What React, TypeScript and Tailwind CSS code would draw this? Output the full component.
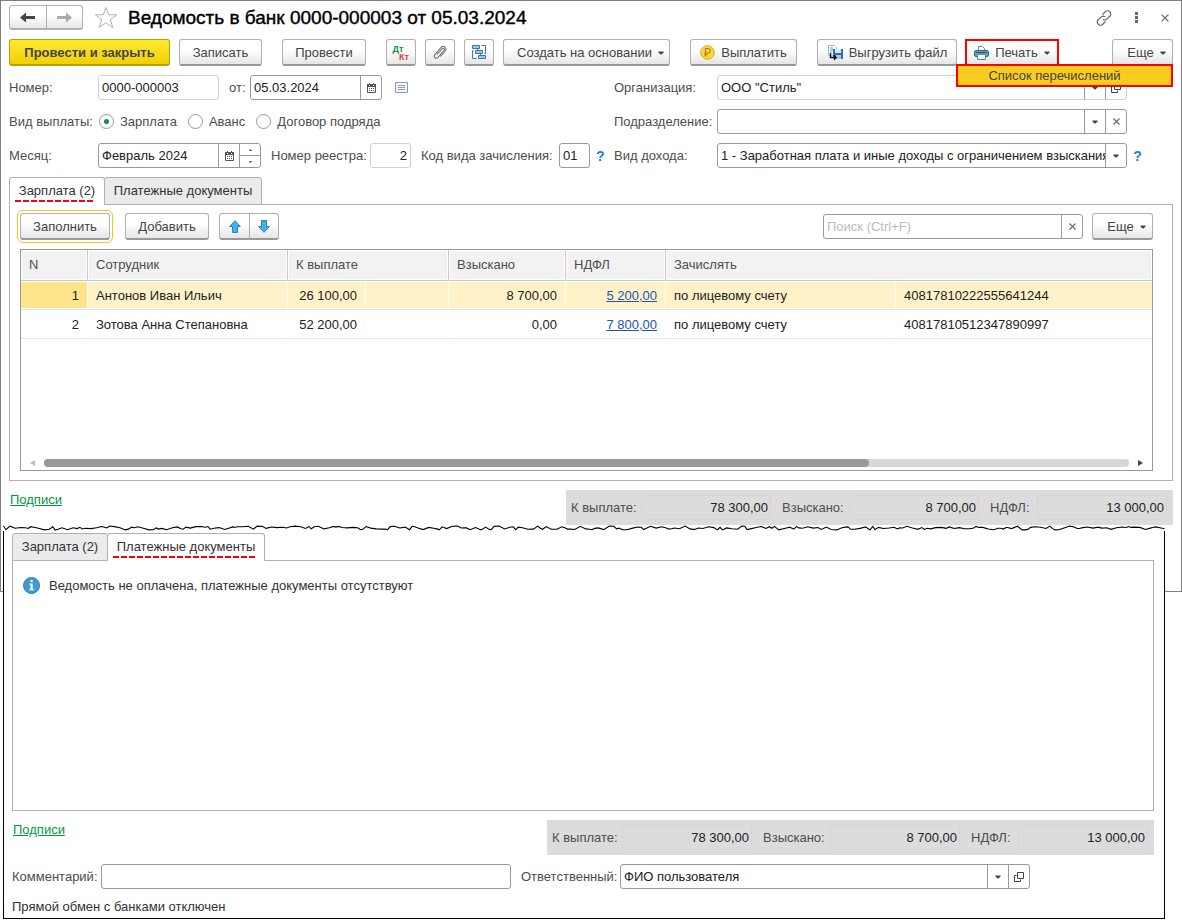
import { useState } from "react";
import type { ReactNode } from "react";
import clsx from "clsx";

interface ToolButtonProps {
  children: ReactNode;
  className?: string;
  label?: string;
  onClick?: () => void;
}

function ToolButton({ children, className, label, onClick }: ToolButtonProps) {
  return (
    <button
      type="button"
      aria-label={label}
      onClick={onClick}
      className={clsx(
        "flex h-[27px] shrink-0 items-center justify-center rounded-[3px] border border-b-2 border-[#b0b0b0] border-b-[#989898] bg-linear-to-b from-white from-40% to-[#e6e6e6] pt-px whitespace-nowrap text-[#444]",
        className
      )}
    >
      {children}
    </button>
  );
}

function Caret() {
  return (
    <svg width="6" height="4" viewBox="0 0 6 4" fill="#444" aria-hidden="true">
      <path d="M0.500 0.500h5v1L3.500 3.500h-1L0.500 1.500z" />
    </svg>
  );
}

function CrossIcon({ size = 7 }: { size?: number }) {
  return (
    <svg width={size} height={size} viewBox="0 0 7 7" stroke="#666" strokeWidth="1.1" aria-hidden="true">
      <path d="M0.5 0.5l6 6M6.5 0.5l-6 6" />
    </svg>
  );
}

function OpenIcon() {
  return (
    <svg width="10" height="10" viewBox="0 0 10 10" fill="none" stroke="#444" aria-hidden="true">
      <path d="M3.5 0.5h6v6h-6zM2.5 3.5h-2v6h6v-2" />
    </svg>
  );
}

function CalendarIcon() {
  return (
    <svg width="9" height="10" viewBox="0 0 9 10" aria-hidden="true">
      <path d="M0.5 1.5h8v8h-8z" fill="none" stroke="#555" />
      <path d="M0 1h9v3H0zM2 0h1v2H2zM6 0h1v2H6z" fill="#555" />
      <path d="M2 2h1v1H2zM6 2h1v1H6z" fill="#fff" />
      <path d="M2 5h1v1H2zM4 5h1v1H4zM6 5h1v1H6zM2 7h1v1H2zM4 7h1v1H4zM6 7h1v1H6z" fill="#555" />
    </svg>
  );
}

function ArrowIcon({ color, flip = false }: { color: string; flip?: boolean }) {
  return (
    <svg width="15" height="11" viewBox="0 0 15 11" className={clsx(flip && "rotate-180")} aria-hidden="true">
      <path d="M0 5.5L6 0.5v3.5h9v3H6v3.5z" fill={color} />
    </svg>
  );
}

function MoveIcon({ down = false }: { down?: boolean }) {
  return (
    <svg width="12" height="13" viewBox="0 0 12 13" className={clsx(down && "rotate-180")} aria-hidden="true">
      <path d="M6 0.7L11.3 6.5H8.5v6h-5v-6H0.7z" fill="#42b0f0" stroke="#2b83bd" />
    </svg>
  );
}

function StarIcon() {
  return (
    <svg width="24" height="23" viewBox="0 0 24 23" fill="none" stroke="#a9b2ba" aria-hidden="true">
      <path d="M12 1.5l2.7 7.3h8l-6.4 4.8 2.5 8L12 16.8l-6.8 4.8 2.5-8-6.4-4.8h8z" />
    </svg>
  );
}

function LinkIcon() {
  return (
    <svg width="16" height="16" viewBox="0 0 16 16" fill="none" stroke="#666" strokeWidth="1.2" aria-hidden="true">
      <path d="M6.5 4.5l2.7-2.7a3 3 0 0 1 4.6 0 3 3 0 0 1 0 4.4l-2.8 2.7a3 3 0 0 1-4 .3" />
      <path d="M9.5 11.5l-2.7 2.7a3 3 0 0 1-4.6 0 3 3 0 0 1 0-4.4L5 7.1a3 3 0 0 1 4-.3" />
    </svg>
  );
}

function ClipIcon() {
  return (
    <svg width="14" height="15" viewBox="0 0 14 15" fill="none" stroke="#707070" strokeWidth="1.1" aria-hidden="true">
      <path d="M4 9.5l5-5.6c1.3-1.4 3.2.2 2 1.6l-6 6.8c-2 2.2-5-.3-3.2-2.5L8 2.5c2.4-2.7 6.5.4 4.2 3.5L7.5 11.5" />
    </svg>
  );
}

function TreeIcon() {
  return (
    <svg width="15" height="15" viewBox="0 0 15 15" aria-hidden="true">
      <g fill="#a3c6de" stroke="#3c7aa6">
        <path d="M0.5 0.5h7v3h-7zM3.5 5.5h7v3h-7zM6.5 10.5h7v3h-7z" />
      </g>
      <path d="M9.5 0.5h4v8h-1M4.500 13.5h-4v-8h1M5.500 3.500v2M8.500 8.500v2" fill="none" stroke="#3c7aa6" />
    </svg>
  );
}

function CoinIcon() {
  return (
    <svg width="15" height="15" viewBox="0 0 15 15" aria-hidden="true">
      <circle cx="7.5" cy="7.5" r="6.8" fill="#fdd83c" stroke="#e3a61b" />
      <path d="M5.5 11.5v-8H8a2.2 2.2 0 0 1 0 4.5H4.2M4.2 9.8H8" fill="none" stroke="#b87c10" strokeWidth="1.1" />
    </svg>
  );
}

function ExportIcon() {
  return (
    <svg width="16" height="16" viewBox="0 0 16 16" aria-hidden="true">
      <path d="M1.5 0.5h6l2 2v8h-8z" fill="#fff" stroke="#9bb6cc" />
      <path d="M3 3h3M3 5h3M3 7h2" stroke="#5c9bd0" />
      <path d="M6 4h10v10H7l-1-1z" fill="#2f6fb0" />
      <path d="M8 4h6v4H8z" fill="#d8e9f7" />
      <path d="M9 10h5v4H9z" fill="#a9c9e6" />
      <path d="M3.5 8v4.5H8" fill="none" stroke="#111" strokeWidth="1.4" />
      <path d="M7 9.8l3.2 2.9L7 15.600z" fill="#111" />
    </svg>
  );
}

function PrinterIcon() {
  return (
    <svg width="15" height="14" viewBox="0 0 15 14" aria-hidden="true">
      <path d="M4.5 5V0.5h4l2 2V5" fill="#fff" stroke="#5f88a8" />
      <rect x="0.5" y="4.5" width="14" height="6" rx="1.5" fill="#6a9fc6" stroke="#2f6690" />
      <path d="M2 6.5h11" stroke="#1f4c70" />
      <path d="M3.5 8.5h8v5h-8z" fill="#fff" stroke="#5f88a8" />
    </svg>
  );
}

function ListIcon() {
  return (
    <svg width="13" height="11" viewBox="0 0 13 11" fill="none" aria-hidden="true">
      <path d="M0.5 0.5h12v10h-12z" fill="#f6f8fa" stroke="#8c9cad" />
      <path d="M3 3.5h7M3 5.5h7M3 7.5h7" stroke="#8c9cad" />
    </svg>
  );
}

function InfoIcon() {
  return (
    <svg width="17" height="17" viewBox="0 0 17 17" aria-hidden="true">
      <circle cx="8.5" cy="8.5" r="8" fill="#3f9bd0" stroke="#2f7fb0" />
      <path d="M7.5 3h2.2v2H7.5zM6.5 6.5h3.2V12H11v1.2H6.3V12h1.2V7.7h-1z" fill="#fff" />
    </svg>
  );
}

interface FieldProps {
  id: string;
  label: string;
  value?: string;
  muted?: boolean;
  right?: boolean;
  placeholder?: string;
  className?: string;
  children?: ReactNode;
}

// text box with optional side buttons
function Field({ id, label, value = "", muted, right, placeholder, className, children }: FieldProps) {
  const [text, setText] = useState(value);
  return (
    <div
      className={clsx(
        "flex h-[25px] overflow-hidden rounded-[3px] border bg-white",
        muted ? "border-[#d0d0d0]" : "border-[#999]",
        className
      )}
    >
      <input
        id={id}
        aria-label={label}
        value={text}
        placeholder={placeholder}
        onChange={(e) => setText(e.target.value)}
        className={clsx(
          "min-w-0 flex-1 px-[3px] text-[#222] outline-none placeholder:text-[#bbb]",
          right && "text-right"
        )}
      />
      {children}
    </div>
  );
}

function SideButton({ label, children }: { label: string; children: ReactNode }) {
  return (
    <button
      type="button"
      aria-label={label}
      className="flex w-[21px] shrink-0 items-center justify-center border-l border-[#999]"
    >
      {children}
    </button>
  );
}

interface ComboProps {
  id: string;
  options: string[];
  muted?: boolean;
  className?: string;
  children?: ReactNode;
}

function Combo({ id, options, muted, className, children }: ComboProps) {
  return (
    <div
      className={clsx(
        "flex h-[25px] min-w-0 overflow-hidden rounded-[3px] border bg-white",
        muted ? "border-[#d0d0d0]" : "border-[#999]",
        className
      )}
    >
      <select id={id} className="min-w-0 flex-1 appearance-none pl-[3px] text-[#222] outline-none">
        {options.map((option) => (
          <option key={option}>{option}</option>
        ))}
      </select>
      <span className="pointer-events-none flex w-[21px] shrink-0 items-center justify-center border-l border-[#999]">
        <Caret />
      </span>
      {children}
    </div>
  );
}

interface TabsProps {
  active: number;
}

const tabTitles = ["Зарплата (2)", "Платежные документы"];

function Tabs({ active }: TabsProps) {
  return (
    <div role="tablist" className="-mb-px flex">
      {tabTitles.map((title, i) => (
        <button
          key={title}
          type="button"
          role="tab"
          aria-selected={i === active}
          className={clsx(
            "relative h-7 rounded-t-[3px] border border-[#b0b0b0] text-[#333]",
            i === 0 ? "w-24" : "-ml-px w-[158px]",
            i === active ? "border-b-white bg-white" : "bg-[#ebebeb]"
          )}
        >
          {title}
          {i === active && (
            <span className="absolute right-[9px] bottom-0.5 left-[5px] h-0.5 bg-[repeating-linear-gradient(90deg,#f00_0_6px,transparent_6px_8px)]" />
          )}
        </button>
      ))}
    </div>
  );
}

const totals = [
  { id: "pay", label: "К выплате:", value: "78 300,00", width: "w-[70px]" },
  { id: "hold", label: "Взыскано:", value: "8 700,00", width: "w-[67px]" },
  { id: "tax", label: "НДФЛ:", value: "13 000,00", width: "w-[47px]" },
];

function Totals({ prefix }: { prefix: string }) {
  return (
    <div className="flex h-[35px] items-center gap-[11px] bg-[#dcdcdc] pr-1.5 pl-[5px]">
      {totals.map((total) => (
        <div key={total.id} className="flex items-center">
          <label htmlFor={`${prefix}-${total.id}`} className={clsx("whitespace-nowrap", total.width)}>
            {total.label}
          </label>
          <input
            id={`${prefix}-${total.id}`}
            readOnly
            value={total.value}
            className="h-[25px] w-[130px] rounded-[3px] border border-[#d6d6d6] pr-0.5 text-right text-[#222] outline-none"
          />
        </div>
      ))}
    </div>
  );
}

const rows = [
  { n: 1, name: "Антонов Иван Ильич", pay: "26 100,00", hold: "8 700,00", tax: "5 200,00", account: "40817810222555641244" },
  { n: 2, name: "Зотова Анна Степановна", pay: "52 200,00", hold: "0,00", tax: "7 800,00", account: "40817810512347890997" },
];

const headers = [
  { title: "N", span: 1 },
  { title: "Сотрудник", span: 1 },
  { title: "К выплате", span: 2 },
  { title: "Взыскано", span: 1 },
  { title: "НДФЛ", span: 1 },
  { title: "Зачислять", span: 2 },
];

function EmployeeTable() {
  const [selected, setSelected] = useState(1);
  return (
    <div className="flex h-[222px] flex-col justify-between border border-[#999]">
      <table className="w-full table-fixed border-separate border-spacing-0">
        <colgroup>
          <col className="w-[67px]" />
          <col className="w-[200px]" />
          <col className="w-[78px]" />
          <col className="w-[83px]" />
          <col className="w-[117px]" />
          <col className="w-[100px]" />
          <col className="w-[230px]" />
          <col />
        </colgroup>
        <thead>
          <tr>
            {headers.map((h) => (
              <th
                key={h.title}
                colSpan={h.span}
                className="h-[31px] border-r border-b border-[#c8c8c8] bg-[#f2f2f2] px-2 text-left font-normal text-[#4d4d4d] shadow-[inset_0_0_0_1px_#fff] last:border-r-0"
              >
                {h.title}
              </th>
            ))}
          </tr>
        </thead>
        <tbody>
          {rows.map((row) => (
            <tr
              key={row.n}
              onClick={() => setSelected(row.n)}
              className={clsx(
                "text-[#222] *:h-[29px] *:border-r *:border-b *:border-r-white *:border-b-[#e4e4e4] *:px-2 *:pt-0.5 *:shadow-[inset_0_1px_0_#fff,inset_0_-1px_0_#fff] *:last:border-r-0",
                row.n === selected && "bg-[#fff2c8]"
              )}
            >
              <td className={clsx("text-right", row.n === selected && "bg-[#ffe48c]")}>{row.n}</td>
              <td>{row.name}</td>
              <td className="text-right whitespace-nowrap">{row.pay}</td>
              <td />
              <td className="text-right">{row.hold}</td>
              <td className="text-right">
                <a href="#tax" className="text-[#1a56b0] underline">
                  {row.tax}
                </a>
              </td>
              <td>по лицевому счету</td>
              <td>{row.account}</td>
            </tr>
          ))}
        </tbody>
      </table>
      <div className="flex h-[15px] items-center gap-[9px] px-[9px]">
        <svg width="5" height="6" viewBox="0 0 5 6" fill="#bbb" aria-hidden="true">
          <path d="M5 0v6L0 3z" />
        </svg>
        <div className="h-2 flex-1 rounded-full bg-[#d6d6d6]">
          <div className="h-2 w-[76%] rounded-full bg-[#999]" />
        </div>
        <svg width="5" height="6" viewBox="0 0 5 6" fill="#444" aria-hidden="true">
          <path d="M0 0v6l5-3z" />
        </svg>
      </div>
    </div>
  );
}

// ragged line along the cut edge of the lower window
const tornPoints = Array.from({ length: 291 }, (_, i) => {
  const noise = Math.sin(i * 12.9898) * 43758.5453;
  const y = 1 + (noise - Math.floor(noise)) * 4;
  const shift = i === 0 || i === 290 ? 0 : Math.sin(i * 5.3) * 1.8;
  return `${(i * 4 + 0.5 + shift).toFixed(1)},${y.toFixed(1)}`;
}).join(" ");

function TornEdge() {
  return (
    <svg className="block h-[6px] w-full" viewBox="0 0 1161 6" preserveAspectRatio="none" aria-hidden="true">
      <polyline points={tornPoints} fill="none" stroke="#000" strokeWidth="1.1" />
    </svg>
  );
}

const payKinds = ["Зарплата", "Аванс", "Договор подряда"];

function DocumentForm() {
  const [kind, setKind] = useState(payKinds[0]);
  return (
    <div className="grid grid-cols-[605px_minmax(0,1fr)] gap-y-[9px] pr-[46px]">
      <div className="flex items-center">
        <label htmlFor="number" className="w-[89px]">
          Номер:
        </label>
        <Field id="number" label="Номер" value="0000-000003" muted className="w-[121px]" />
        <label htmlFor="date" className="w-[31px] pl-2.5">
          от:
        </label>
        <Field id="date" label="Дата" value="05.03.2024" className="w-[132px]">
          <SideButton label="Выбрать дату">
            <CalendarIcon />
          </SideButton>
        </Field>
        <button type="button" aria-label="Список" className="ml-[13px]">
          <ListIcon />
        </button>
      </div>
      <div className="flex items-center">
        <label htmlFor="org" className="w-[103px] shrink-0">
          Организация:
        </label>
        <Combo id="org" options={['ООО "Стиль"']} muted className="flex-1">
          <SideButton label="Открыть">
            <OpenIcon />
          </SideButton>
        </Combo>
      </div>

      <fieldset className="flex h-[25px] items-center">
        <legend className="float-left w-[90px]">Вид выплаты:</legend>
        <div className="flex gap-[11px]">
          {payKinds.map((k) => (
            <label key={k} className="flex items-center gap-1.5 whitespace-nowrap">
              <input
                type="radio"
                name="kind"
                checked={kind === k}
                onChange={() => setKind(k)}
                className="grid size-[15px] appearance-none place-items-center rounded-full border border-[#999] bg-white before:size-[5px] before:rounded-full checked:before:bg-[#009646]"
              />
              {k}
            </label>
          ))}
        </div>
      </fieldset>
      <div className="flex items-center">
        <label htmlFor="dept" className="w-[103px] shrink-0">
          Подразделение:
        </label>
        <Combo id="dept" options={[""]} className="flex-1">
          <SideButton label="Очистить">
            <CrossIcon />
          </SideButton>
        </Combo>
      </div>

      <div className="flex items-center">
        <label htmlFor="month" className="w-[89px]">
          Месяц:
        </label>
        <Field id="month" label="Месяц" value="Февраль 2024" className="w-[163px]">
          <SideButton label="Выбрать месяц">
            <CalendarIcon />
          </SideButton>
          <div className="flex w-[21px] flex-col border-l border-[#999]">
            <button type="button" aria-label="Больше" className="flex flex-1 items-center justify-center border-b border-[#999]">
              <svg width="3" height="2" viewBox="0 0 3 2" fill="#444">
                <path d="M0 2L1.5 0L3 2z" />
              </svg>
            </button>
            <button type="button" aria-label="Меньше" className="flex flex-1 items-center justify-center">
              <svg width="3" height="2" viewBox="0 0 3 2" fill="#444">
                <path d="M0 0L1.5 2L3 0z" />
              </svg>
            </button>
          </div>
        </Field>
        <label htmlFor="registry" className="w-[109px] pl-2.5 whitespace-nowrap">
          Номер реестра:
        </label>
        <Field id="registry" label="Номер реестра" value="2" muted right className="w-[41px]" />
        <label htmlFor="code" className="w-[148px] pl-2.5 whitespace-nowrap">
          Код вида зачисления:
        </label>
        <Field id="code" label="Код вида зачисления" value="01" className="w-[31px]" />
        <button type="button" className="ml-1.5 text-sm font-bold text-[#1583cc]">
          ?
        </button>
      </div>
      <div className="flex items-center">
        <label htmlFor="income" className="w-[103px] shrink-0">
          Вид дохода:
        </label>
        <Combo
          id="income"
          options={["1 - Заработная плата и иные доходы с ограничением взыскания"]}
          className="flex-1"
        />
        <button type="button" className="-mr-[15px] ml-1.5 w-[9px] shrink-0 text-sm font-bold text-[#1583cc]">
          ?
        </button>
      </div>
    </div>
  );
}

function Toolbar() {
  const [open, setOpen] = useState(true);
  return (
    <div className="flex items-center">
      <button
        type="button"
        className="h-[27px] w-[161px] shrink-0 rounded-[3px] border border-b-2 border-[#b8a000] bg-linear-to-b from-[#ffe92e] to-[#f2cf00] pt-px font-bold whitespace-nowrap text-[#444]"
      >
        Провести и закрыть
      </button>
      <ToolButton className="ml-[9px] w-[83px]">Записать</ToolButton>
      <ToolButton className="ml-5 w-[84px]">Провести</ToolButton>
      <ToolButton className="ml-5 w-[30px]" label="Дт/Кт">
        <span className="flex flex-col text-[9px] leading-[8px] font-bold">
          <span className="pr-1.5 text-[#009646]">Дт</span>
          <span className="pl-1.5 text-[#e03c3c]">Кт</span>
        </span>
      </ToolButton>
      <ToolButton className="ml-[9px] w-[30px]" label="Присоединенные файлы">
        <ClipIcon />
      </ToolButton>
      <ToolButton className="ml-[9px] w-[30px]" label="Структура подчиненности">
        <TreeIcon />
      </ToolButton>
      <ToolButton className="ml-[9px] w-[167px] gap-1.5 pl-2">
        Создать на основании
        <Caret />
      </ToolButton>
      <ToolButton className="ml-5 w-[107px] gap-1.5">
        <CoinIcon />
        Выплатить
      </ToolButton>
      <ToolButton className="ml-5 w-[140px] gap-1.5">
        <ExportIcon />
        Выгрузить файл
      </ToolButton>
      <div className="ml-2 flex-1">
        <button
          type="button"
          aria-haspopup="menu"
          aria-expanded={open}
          onClick={() => setOpen(!open)}
          className="flex h-[27px] w-[94px] items-center justify-center gap-1.5 border-2 border-[#f00] bg-linear-to-b from-white from-40% to-[#e6e6e6] text-[#444]"
        >
          <PrinterIcon />
          Печать
          <Caret />
        </button>
      </div>
      <div className="relative">
        <ToolButton className="w-[61px] gap-1.5 pl-2">
          Еще
          <Caret />
        </ToolButton>
        {open && (
          <div role="menu" className="absolute top-[25px] right-0 z-10 w-[217px]">
            <button
              type="button"
              role="menuitem"
              className="h-[23px] w-full border-2 border-[#f00] bg-[#facc20] pr-5 text-center text-[#444]"
            >
              Список перечислений
            </button>
          </div>
        )}
      </div>
    </div>
  );
}

export default function App() {
  return (
    <div className="bg-white pb-0.5 font-['Liberation_Sans',Arial,sans-serif] text-[13px] leading-4 text-[#4d4d4d]">
      <main className="border border-[#808080] px-2 pt-1 pb-[66px]">
        <header className="flex h-[25px] items-center">
          <div className="flex h-[25px] w-[74px] rounded-[3px] border border-b-2 border-[#b0b0b0] bg-linear-to-b from-white from-40% to-[#e6e6e6]">
            <button type="button" aria-label="Назад" className="flex flex-1 items-center justify-center border-r border-[#b0b0b0]">
              <ArrowIcon color="#444" />
            </button>
            <button type="button" aria-label="Вперед" className="flex flex-1 items-center justify-center">
              <ArrowIcon color="#aaa" flip />
            </button>
          </div>
          <button type="button" aria-label="В избранное" className="ml-[11px]">
            <StarIcon />
          </button>
          <h1 className="ml-2.5 flex-1 text-[19px] leading-6 whitespace-nowrap text-black [-webkit-text-stroke:0.4px]">
            Ведомость в банк 0000-000003 от 05.03.2024
          </h1>
          <div className="flex items-center gap-[23px] pr-1">
            <button type="button" aria-label="Ссылка">
              <LinkIcon />
            </button>
            <button type="button" aria-label="Меню">
              <svg width="3" height="11" viewBox="0 0 3 11" fill="#666">
                <path d="M0 0h3v3H0zM0 4h3v3H0zM0 8h3v3H0z" />
              </svg>
            </button>
            <button type="button" aria-label="Закрыть">
              <CrossIcon size={8} />
            </button>
          </div>
        </header>

        <div className="mt-[9px]">
          <Toolbar />
        </div>
        <div className="mt-[9px]">
          <DocumentForm />
        </div>

        <div className="mt-[9px]">
          <Tabs active={0} />
          <div className="border border-[#b0b0b0] pt-2 pr-[19px] pb-[9px] pl-2.5">
            <div className="flex items-center">
              <ToolButton className="w-[90px] outline-1 outline-offset-2 outline-[#f5c518]">Заполнить</ToolButton>
              <ToolButton className="ml-[15px] w-[84px]">Добавить</ToolButton>
              <div className="ml-2.5 flex">
                <ToolButton className="w-[31px] rounded-r-none" label="Вверх">
                  <MoveIcon />
                </ToolButton>
                <ToolButton className="-ml-px w-[30px] rounded-l-none" label="Вниз">
                  <MoveIcon down />
                </ToolButton>
              </div>
              <Field id="search" label="Поиск" placeholder="Поиск (Ctrl+F)" className="ml-auto w-[260px]">
                <SideButton label="Очистить поиск">
                  <CrossIcon />
                </SideButton>
              </Field>
              <ToolButton className="ml-[9px] w-[61px] gap-1.5 pl-2">
                Еще
                <Caret />
              </ToolButton>
            </div>
            <div className="mt-[9px]">
              <EmployeeTable />
            </div>
          </div>
        </div>

        <div className="mt-[9px] flex items-start justify-between">
          <a href="#signatures" className="mt-0.5 ml-px text-[#009646] underline">
            Подписи
          </a>
          <Totals prefix="main" />
        </div>
      </main>

      <section className="relative mr-[17px] ml-[3px] -mt-[67px] bg-white">
        <TornEdge />
        <div className="border-x border-b border-black pt-0.5 pr-2.5 pb-[3px] pl-2">
          <Tabs active={1} />
          <div className="h-[251px] border border-[#b0b0b0] p-2.5">
            <p className="flex h-[29px] items-center gap-[9px] text-[#333]">
              <InfoIcon />
              Ведомость не оплачена, платежные документы отсутствуют
            </p>
          </div>
          <div className="mt-[9px] flex items-start justify-between">
            <a href="#signatures" className="mt-0.5 ml-px text-[#009646] underline">
              Подписи
            </a>
            <Totals prefix="lower" />
          </div>
          <div className="mt-[9px] flex items-center">
            <label htmlFor="comment" className="w-[89px] whitespace-nowrap">
              Комментарий:
            </label>
            <Field id="comment" label="Комментарий" className="w-[410px]" />
            <label htmlFor="owner" className="w-[109px] pl-2.5 whitespace-nowrap">
              Ответственный:
            </label>
            <Combo id="owner" options={["ФИО пользователя"]} className="w-[410px]">
              <SideButton label="Открыть карточку">
                <OpenIcon />
              </SideButton>
            </Combo>
          </div>
          <p className="mt-2.5 text-[#333]">Прямой обмен с банками отключен</p>
        </div>
      </section>
    </div>
  );
}
